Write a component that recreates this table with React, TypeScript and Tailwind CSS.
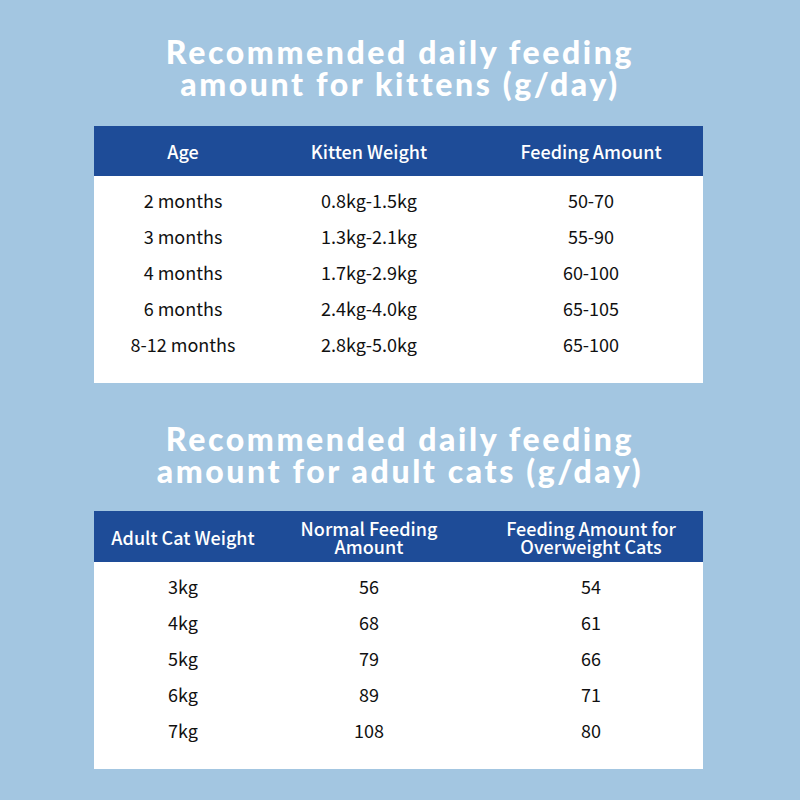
const kittens = [
  ['2 months', '0.8kg-1.5kg', '50-70'],
  ['3 months', '1.3kg-2.1kg', '55-90'],
  ['4 months', '1.7kg-2.9kg', '60-100'],
  ['6 months', '2.4kg-4.0kg', '65-105'],
  ['8-12 months', '2.8kg-5.0kg', '65-100'],
]

const adults = [
  ['3kg', '56', '54'],
  ['4kg', '68', '61'],
  ['5kg', '79', '66'],
  ['6kg', '89', '71'],
  ['7kg', '108', '80'],
]

const bodyFont = "font-['Noto_Sans_CJK_SC','Noto_Sans',sans-serif]"

function Title({ lines }: { lines: string[] }) {
  return (
    <h2 className="text-center text-white font-['Lato',sans-serif] font-black text-[32px] leading-[32px] tracking-[2.6px]">
      {lines.map((l) => (
        <div key={l}>{l}</div>
      ))}
    </h2>
  )
}

function Table({ head, rows, headH }: { head: React.ReactNode[]; rows: string[][]; headH: string }) {
  return (
    <div className={`ml-[94px] w-[609px] bg-white ${bodyFont}`}>
      <div className={`grid grid-cols-[178px_194px_1fr] items-center bg-[#1e4c98] text-white font-medium text-[18px] leading-[18px] ${headH}`}>
        {head.map((h, i) => (
          <div key={i} className={`text-center ${i === 2 ? 'pl-[13px]' : ''}`}>
            {h}
          </div>
        ))}
      </div>
      <div className="pt-[6px] pb-[21px] text-[#111111] text-[18px]">
        {rows.map((r) => (
          <div key={r[0]} className="grid grid-cols-[178px_194px_1fr] h-[36px] items-center">
            {r.map((c, i) => (
              <div key={i} className={`text-center ${i === 2 ? 'pl-[13px]' : ''}`}>
                {c}
              </div>
            ))}
          </div>
        ))}
      </div>
    </div>
  )
}

export default function App() {
  return (
    <div className="w-[800px] h-[800px] bg-[#a3c6e1] overflow-hidden">
      <div className="pt-[36px]">
        <Title lines={['Recommended daily feeding', 'amount for kittens (g/day)']} />
      </div>
      <div className="mt-[26px]">
        <Table head={['Age', 'Kitten Weight', 'Feeding Amount']} rows={kittens} headH="h-[50px]" />
      </div>
      <div className="mt-[40px]">
        <Title lines={['Recommended daily feeding', 'amount for adult cats (g/day)']} />
      </div>
      <div className="mt-[24px]">
        <Table
          head={[
            'Adult Cat Weight',
            <>
              Normal Feeding
              <br />
              Amount
            </>,
            <>
              Feeding Amount for
              <br />
              Overweight Cats
            </>,
          ]}
          rows={adults}
          headH="h-[51px]"
        />
      </div>
    </div>
  )
}
